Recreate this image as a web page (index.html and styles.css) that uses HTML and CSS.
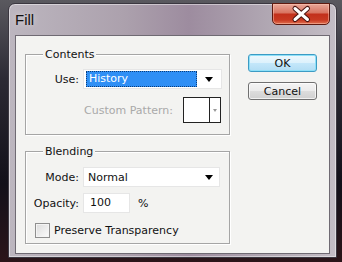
FILE: index.html
```html
<!DOCTYPE html>
<html lang="en">
<head>
  <meta charset="UTF-8" />
  <title>Fill</title>
  <link rel="stylesheet" href="styles.css">
</head>
<body>
  <div class="window">
    <div class="titlebar">
      <span class="title">Fill</span>
      <!-- boton de cerrar estilo Windows 7 -->
      <span class="close">
        <svg width="58" height="22" viewBox="0 0 58 22">
          <path d="M23 5.5 L35.5 16.5 M35.5 5.5 L23 16.5" stroke="#4a1510" stroke-width="5" stroke-linecap="round"/>
          <path d="M23 5.5 L35.5 16.5 M35.5 5.5 L23 16.5" stroke="#fff" stroke-width="3" stroke-linecap="round"/>
        </svg>
      </span>
    </div>

    <div class="client">
      <div class="groups">
        <div class="group contents">
          <span class="group-title">Contents</span>
          <div class="row use-row">
            <span class="label">Use:</span>
            <div class="select use-select">
              <span class="selected">History</span>
              <span class="arrow"></span>
            </div>
          </div>
          <div class="row pattern-row">
            <span class="label disabled">Custom Pattern:</span>
            <div class="swatch">
              <span class="swatch-box"></span>
              <span class="swatch-btn"><span class="swatch-arrow"></span></span>
            </div>
          </div>
        </div>

        <div class="group blending">
          <span class="group-title">Blending</span>
          <div class="field-row mode-row">
            <span class="field-label">Mode:</span>
            <div class="select mode-select">
              <span class="value">Normal</span>
              <span class="arrow"></span>
            </div>
          </div>
          <div class="field-row opacity-row">
            <span class="field-label">Opacity:</span>
            <div class="input">100</div>
            <span class="unit">%</span>
          </div>
          <div class="check-row">
            <span class="checkbox"></span>
            <span>Preserve Transparency</span>
          </div>
        </div>
      </div>

      <div class="buttons">
        <button class="btn default">OK</button>
        <button class="btn">Cancel</button>
      </div>
    </div>
  </div>
</body>
</html>
```
FILE: styles.css
```css
/* fondo oscuro del escritorio */
body {
  margin: 0;
  width: 342px;
  height: 262px;
  overflow: hidden;
  background: linear-gradient(180deg, #5a595f 0%, #2c2a34 30%, #121019 70%, #2b1519 100%);
  font-family: "DejaVu Sans", sans-serif;
  font-size: 11px;
  color: #111;
}

/* marco de la ventana */
.window {
  box-sizing: border-box;
  position: relative;
  margin: 3px 0 0 8px;
  width: 329px;
  height: 255px;
  padding: 0 6px 3px;
  border: 1px solid #3b3740;
  border-radius: 7px 7px 0 0;
  background: linear-gradient(90deg, #bcb6bf 0%, #aca1ad 35%, #9d8c9f 55%, #b1a8b3 80%, #c3bdc5 100%);
  box-shadow: inset 0 0 0 1px rgba(255, 255, 255, 0.45);
}

.titlebar {
  height: 31px;
  display: flex;
  align-items: center;
}

.title {
  font-family: "Liberation Sans", sans-serif;
  font-size: 15px;
  color: #111;
  text-shadow: 0 0 6px rgba(255, 255, 255, 0.6);
}

.close {
  position: absolute;
  top: -1px;
  right: 6px;
  width: 58px;
  height: 22px;
  box-sizing: border-box;
  border: 1px solid #5e1a10;
  border-radius: 0 0 5px 5px;
  background: linear-gradient(180deg, #e8a799 0%, #d8735f 45%, #c2301b 50%, #c83a22 80%, #e0704f 100%);
  box-shadow: inset 0 0 0 1px rgba(255, 200, 180, 0.5);
}

.close svg {
  display: block;
  margin: -1px;
}

/* area de cliente */
.client {
  box-sizing: border-box;
  height: 219px;
  border: 1px solid #6f6a73;
  background: #f3f3f1;
  display: flex;
  gap: 18px;
  padding: 18px 0 0 9px;
}

.groups {
  width: 205px;
  display: flex;
  flex-direction: column;
  gap: 16px;
}

.group {
  box-sizing: border-box;
  border: 1px solid #a5a5a5;
  box-shadow: 1px 1px 0 #fff, inset 1px 1px 0 #fff;
}

.contents {
  height: 81px;
}

.blending {
  height: 93px;
}

.group-title {
  display: table;
  margin: -7px 0 0 17px;
  padding: 0 2px;
  line-height: 13px;
  background: #f3f3f1;
}

.row {
  display: flex;
  align-items: center;
  justify-content: flex-end;
  padding-right: 7px;
}

.use-row {
  margin-top: 8px;
  gap: 4px;
}

.pattern-row {
  margin-top: 8px;
  gap: 10px;
  padding-right: 8px;
}

.label.disabled {
  color: #a9a9a9;
}

.select {
  box-sizing: border-box;
  height: 20px;
  display: flex;
  align-items: center;
  background: #fff;
  border: 1px solid #e6e6e6;
}

.use-select {
  width: 139px;
  padding: 0 2px;
}

.selected {
  box-sizing: border-box;
  width: 111px;
  height: 16px;
  line-height: 14px;
  padding-left: 2px;
  background: #2f8ff5;
  border: 1px dotted #0b3d7a;
  color: #fff;
}

.arrow {
  margin-left: auto;
  margin-right: 6px;
  border-top: 5px solid #000;
  border-left: 4.5px solid transparent;
  border-right: 4.5px solid transparent;
}

.swatch {
  box-sizing: border-box;
  width: 38px;
  height: 26px;
  display: flex;
  border: 1px solid #222;
  background: #fff;
}

.swatch-box {
  width: 25px;
  border-right: 1px solid #222;
}

.swatch-btn {
  flex: 1;
  display: flex;
  align-items: center;
  justify-content: center;
}

.swatch-arrow {
  border-top: 3px solid #999;
  border-left: 2px solid transparent;
  border-right: 2px solid transparent;
}

/* filas de Blending */
.field-row {
  display: flex;
  align-items: center;
  gap: 4px;
}

.field-label {
  width: 53px;
  text-align: right;
}

.mode-row {
  margin-top: 9px;
}

.opacity-row {
  margin-top: 6px;
}

.mode-select {
  width: 137px;
  padding-left: 4px;
}

.input {
  box-sizing: border-box;
  width: 47px;
  height: 20px;
  line-height: 18px;
  padding-left: 6px;
  background: #fff;
  border: 1px solid #e6e6e6;
}

.unit {
  margin-left: 4px;
}

.check-row {
  display: flex;
  align-items: center;
  gap: 4px;
  margin-top: 10px;
  padding-left: 9px;
}

.checkbox {
  box-sizing: border-box;
  width: 15px;
  height: 15px;
  border: 1px solid #8f8f8f;
  background: linear-gradient(135deg, #dcdcdc, #fbfbfb);
  box-shadow: inset 0 0 0 1px #f4f4f4;
}

/* botones */
.buttons {
  width: 69px;
  display: flex;
  flex-direction: column;
  gap: 10px;
}

.btn {
  box-sizing: border-box;
  width: 69px;
  height: 18px;
  padding: 0;
  font-family: "DejaVu Sans", sans-serif;
  font-size: 11px;
  color: #111;
  border: 1px solid #707070;
  border-radius: 3px;
  background: linear-gradient(180deg, #f4f4f4 0%, #ebebeb 50%, #dddddd 51%, #d0d0d0 100%);
  box-shadow: inset 0 0 0 1px rgba(255, 255, 255, 0.7);
}

.btn.default {
  border-color: #3c9bc4;
  background: linear-gradient(180deg, #eef8fd 0%, #dcf1fc 50%, #c4e7fa 51%, #b2ddf4 100%);
  box-shadow: inset 0 0 0 1px #8ee0f8;
}
```
